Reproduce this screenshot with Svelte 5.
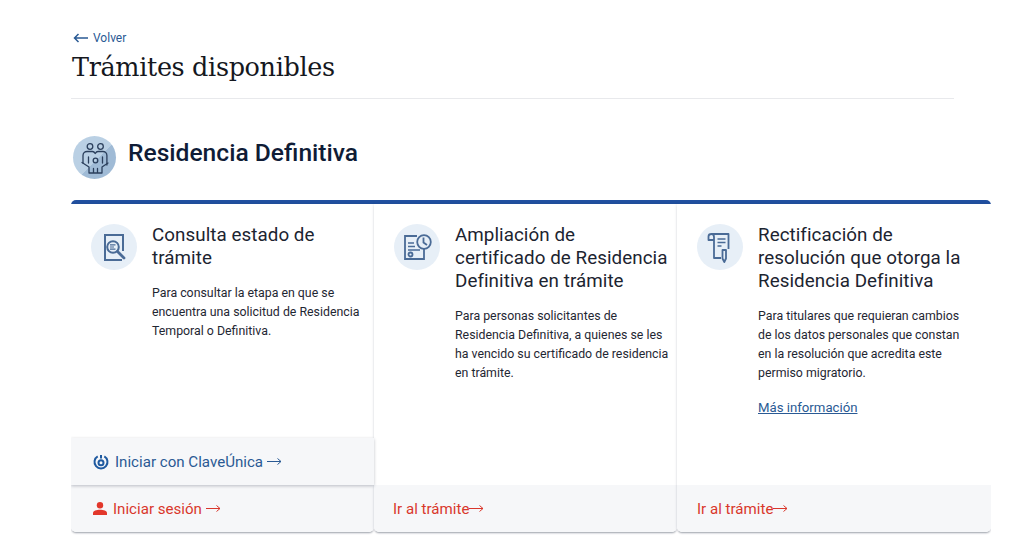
<script lang="ts">
  const tramites = [
    {
      icon: 'search',
      title: 'Consulta estado de trámite',
      text: 'Para consultar la etapa en que se encuentra una solicitud de Residencia Temporal o Definitiva.',
      action: 'Iniciar sesión',
      login: true,
      more: false,
    },
    {
      icon: 'clock',
      title: 'Ampliación de certificado de Residencia Definitiva en trámite',
      text: 'Para personas solicitantes de Residencia Definitiva, a quienes se les ha vencido su certificado de residencia en trámite.',
      action: 'Ir al trámite',
      login: false,
      more: false,
    },
    {
      icon: 'scroll',
      title: 'Rectificación de resolución que otorga la Residencia Definitiva',
      text: 'Para titulares que requieran cambios de los datos personales que constan en la resolución que acredita este permiso migratorio.',
      action: 'Ir al trámite',
      login: false,
      more: true,
    },
  ];
</script>

{#snippet arrow()}
  <svg class="arrow" width="15" height="9" viewBox="0 0 15 9" fill="none" stroke="currentColor" stroke-width="1">
    <path d="M0 4.500h14M10.500 1.500l3.500 3-3.500 3" />
  </svg>
{/snippet}

<main class="page">
  <header class="head">
    <a class="back" href="#volver">
      <svg width="16" height="10" viewBox="0 0 16 10" fill="none" stroke="#2a5a94" stroke-width="1.5">
        <path d="M15 5H1.500M5.500 1l-4 4 4 4" />
      </svg>
      Volver
    </a>
    <h1>Trámites disponibles</h1>
  </header>

  <section class="group">
    <div class="avatar">
      <svg width="32" height="32" viewBox="0 0 32 32" fill="none" stroke="#2b3f5c" stroke-width="1.300" stroke-linejoin="round" stroke-linecap="round">
        <circle cx="11" cy="4.500" r="2.800" />
        <circle cx="21.500" cy="4.500" r="2.800" />
        <path d="M4 21v-7.500C4 11 6 9.500 8 9.500h5.500c1.200 0 2 .8 2.700 2 .7-1.200 1.500-2 2.700-2h5c2 0 4 1.500 4 4V23" />
        <path d="M9.500 21v-6M23.500 21v-6" />
        <circle cx="16.500" cy="18.500" r="2.300" />
        <path d="M3 20.500l7 4.500v6h13v-6l6-4M14.500 31v-4.500M18.500 31v-4.500" />
      </svg>
    </div>
    <h2>Residencia Definitiva</h2>
  </section>

  <div class="cards">
    {#each tramites as t}
      <article class="card">
        <div class="body">
          <div class="icon">
            {#if t.icon === 'search'}
              <svg width="24" height="30" viewBox="0 0 24 30" fill="none" stroke="#4a6b96" stroke-width="2">
                <path d="M21 19V3H3v25h17" />
                <circle cx="11" cy="15" r="5.800" />
                <path d="M15.500 19.500l6.500 6.500" stroke-width="2.800" stroke-linecap="round" />
                <path d="M8 12.800h5.500M8 15h4M8 17.200h5.500" stroke-width="1.200" />
              </svg>
            {:else if t.icon === 'clock'}
              <svg width="30" height="30" viewBox="0 0 30 30" fill="none" stroke="#4a6b96" stroke-width="1.800">
                <path d="M15 4H3v23h19V17" />
                <circle cx="22" cy="10" r="6.800" />
                <path d="M21.500 5.500V10.500l3.500 2.500" />
                <path d="M6 11h6M6 14.500h7M6 18h12" stroke-width="1.500" />
                <circle cx="8.500" cy="22.500" r="2" />
              </svg>
            {:else}
              <svg width="26" height="32" viewBox="0 0 26 32" fill="none" stroke="#4a6b96" stroke-width="1.800" stroke-linejoin="round">
                <path d="M7 9H1.500V5.500C1.500 4 3 3 4.500 3h17v15" />
                <path d="M4.500 3C6 3 7 4.500 7 6V27h7" />
                <path d="M10.500 8h8M10.500 11.500h8M10.500 15h4" stroke-width="1.400" />
                <path d="M15.500 19h3.500v8.500l-1.700 3.500-1.800-3.500z" />
              </svg>
            {/if}
          </div>
          <div class="copy">
            <h3>{t.title}</h3>
            <p>{t.text}</p>
            {#if t.more}
              <a class="more" href="#info">Más información</a>
            {/if}
          </div>
        </div>
        {#if t.login}
          <a class="clave" href="#clave">
            <svg width="16" height="16" viewBox="0 0 16 16" fill="none" stroke="#1f5aa0" stroke-width="2">
              <path d="M4.700 2.300a6.500 6.500 0 1 0 6.600 0" />
              <path d="M8 1v3.500" />
              <circle cx="8" cy="8.800" r="2.500" />
            </svg>
            <span>Iniciar con ClaveÚnica</span>
            {@render arrow()}
          </a>
        {/if}
        <a class="foot" class:login={t.login} href="#ir">
          {#if t.login}
            <svg width="14" height="13" viewBox="0 0 14 13" fill="#e2372b">
              <circle cx="7" cy="3.200" r="3.200" />
              <path d="M0 13v-2c0-2.200 3.500-3.300 7-3.300s7 1.100 7 3.300v2z" />
            </svg>
          {/if}
          <span>{t.action}</span>
          {@render arrow()}
        </a>
      </article>
    {/each}
  </div>
</main>

<style>
  :global(body) {
    margin: 0;
    background: #fff;
  }
  .page {
    width: 920px;
    height: 542px;
    margin-left: 71px;
    padding-top: 30px;
    box-sizing: border-box;
    font-family: Roboto, "Liberation Sans", sans-serif;
    overflow: hidden;
  }
  .head {
    width: 883px;
    height: 68px;
    border-bottom: 1px solid #e8e9ec;
  }
  .back {
    display: flex;
    align-items: center;
    gap: 4px;
    margin-left: 2px;
    height: 15px;
    font-size: 12px;
    color: #2a5a94;
    text-decoration: none;
  }
  h1 {
    margin: 4px 0 0 1px;
    font-family: "DejaVu Serif", serif;
    font-weight: 400;
    font-size: 25.500px;
    letter-spacing: -0.35px;
    line-height: 36px;
    color: #15181e;
  }
  .group {
    display: flex;
    align-items: flex-start;
    gap: 12px;
    margin: 37px 0 0 2px;
    height: 43px;
  }
  .avatar {
    flex: none;
    width: 43px;
    height: 43px;
    border-radius: 50%;
    background: linear-gradient(135deg, #bad0e4 55%, #a0bbd6 55%);
    display: flex;
    align-items: center;
    justify-content: center;
  }
  h2 {
    margin: 0;
    font-size: 24.600px;
    line-height: 34px;
    font-weight: 500;
    color: #0f1c36;
  }
  .cards {
    display: grid;
    grid-template-columns: 303px 303px 314px;
    height: 332px;
    margin-top: 21px;
    border-top: 4px solid #2150a0;
    border-radius: 5px 5px 0 0;
    box-sizing: border-box;
  }
  .card {
    display: flex;
    flex-direction: column;
    background: #fff;
    border-radius: 0 0 5px 5px;
    box-shadow: 0 2px 2px -1px rgba(30, 40, 60, 0.38), 0 0 3px rgba(30, 40, 60, 0.16);
    min-width: 0;
  }
  .body {
    flex: 1;
    display: flex;
    gap: 15px;
    padding: 20px 0 0 20px;
  }
  .icon {
    flex: none;
    width: 46px;
    height: 46px;
    border-radius: 50%;
    background: #e7eff7;
    display: flex;
    align-items: center;
    justify-content: center;
  }
  .copy {
    width: 214px;
    min-width: 0;
  }
  h3 {
    margin: 0;
    max-width: 213px;
    font-size: 18.800px;
    letter-spacing: 0.06px;
    font-weight: 400;
    line-height: 23px;
    color: #1c2430;
  }
  p {
    margin: 14px 0 0;
    font-size: 12.350px;
    line-height: 19px;
    color: #1f2733;
  }
  .more {
    display: inline-block;
    margin-top: 15px;
    font-size: 13.200px;
    line-height: 19px;
    color: #2a5a94;
  }
  .clave,
  .foot {
    display: flex;
    align-items: center;
    height: 47px;
    padding-left: 19px;
    font-size: 15.100px;
    text-decoration: none;
    background: #f6f7f9;
    flex: none;
  }
  .clave {
    gap: 6px;
    padding-left: 22px;
    color: #2a5a94;
    box-shadow: 0 1px 3px rgba(30, 40, 60, 0.28);
    position: relative;
  }
  .clave .arrow {
    margin-left: -2px;
  }
  .foot {
    color: #d9372c;
    border-radius: 0 0 5px 5px;
  }
  .card:last-child .foot {
    padding-left: 20px;
  }
  .foot.login {
    gap: 6px;
    padding-left: 22px;
  }
  .foot.login .arrow {
    margin-left: -2px;
  }
</style>
